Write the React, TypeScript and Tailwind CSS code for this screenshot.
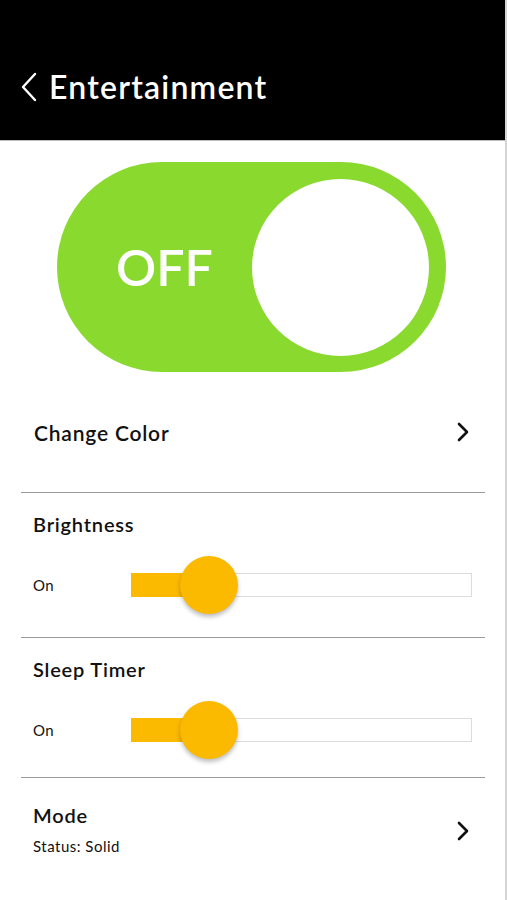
import React from "react";

const Chevron = ({ className }: { className?: string }) => (
  <svg className={className} viewBox="0 0 14 22" fill="none" stroke="#111" strokeWidth="2.6" strokeLinecap="round" strokeLinejoin="round">
    <path d="M3 3 L11 11 L3 19" />
  </svg>
);

const Slider = () => (
  <div className="relative h-[24px] w-[341px]">
    <div className="absolute inset-0 border border-[#dcdcdc] bg-white" />
    <div className="absolute left-0 top-0 h-[24px] w-[80px] bg-[#fbb900]" />
    <div className="absolute left-[49px] top-[-17px] h-[58px] w-[58px] rounded-full bg-[#fbb900] shadow-[0_3px_4px_rgba(0,0,0,0.25)]" />
  </div>
);

export default function App() {
  return (
    <div className="flex w-[507px] bg-white" style={{ fontFamily: "Lato, 'Open Sans', sans-serif" }}>
      <div className="flex h-[900px] w-[507px] flex-col border-r-2 border-[#d4d4d4]">
        <div className="flex h-[141px] items-end border-b border-[#bdbdbd] bg-black pb-[37px] pl-[20px]">
          <svg className="mb-[1px] h-[30px] w-[18px]" viewBox="0 0 18 30" fill="none" stroke="#fff" strokeWidth="2.4" strokeLinecap="round" strokeLinejoin="round">
            <path d="M15 2 L3 15 L15 28" />
          </svg>
          <span className="ml-[11px] text-[32px] font-semibold leading-none tracking-[1.2px] text-white">Entertainment</span>
        </div>

        <div className="flex justify-center pt-[21px] pr-[2px]">
          <div className="flex h-[210px] w-[389px] items-center rounded-full bg-[#8ad92e] pr-[17px]">
            <div className="flex flex-1 justify-center pl-[20px] text-[50px] font-semibold leading-none text-white">OFF</div>
            <div className="h-[177px] w-[177px] rounded-full bg-white" />
          </div>
        </div>

        <div className="mx-[21px] mr-[20px] flex h-[121px] items-start justify-between border-b border-[#9a9a9a] pt-[48px] pl-[13px] pr-[15px]">
          <span className="text-[21px] font-semibold leading-[26px] tracking-[0.8px] text-[#111]">Change Color</span>
          <Chevron className="mt-[1px] h-[22px] w-[14px]" />
        </div>

        <div className="ml-[21px] mr-[20px] flex h-[145px] flex-col border-b border-[#9a9a9a] pl-[12px] pr-[13px] pt-[19px]">
          <span className="text-[20px] font-semibold leading-[24px] tracking-[0.8px] text-[#111]">Brightness</span>
          <div className="mt-[37px] flex items-center">
            <span className="w-[98px] text-[15px] tracking-[0.5px] text-[#111]">On</span>
            <Slider />
          </div>
        </div>

        <div className="ml-[21px] mr-[20px] flex h-[140px] flex-col border-b border-[#9a9a9a] pl-[12px] pr-[13px] pt-[19px]">
          <span className="text-[20px] font-semibold leading-[24px] tracking-[0.8px] text-[#111]">Sleep Timer</span>
          <div className="mt-[37px] flex items-center">
            <span className="w-[98px] text-[15px] tracking-[0.5px] text-[#111]">On</span>
            <Slider />
          </div>
        </div>

        <div className="ml-[21px] mr-[20px] flex items-center justify-between pl-[12px] pr-[15px] pt-[25px]">
          <div className="flex flex-col">
            <span className="text-[20px] font-semibold leading-[24px] tracking-[0.8px] text-[#111]">Mode</span>
            <span className="mt-[8px] text-[15px] tracking-[0.5px] text-[#111]">Status: Solid</span>
          </div>
          <Chevron className="mt-[2px] h-[22px] w-[14px]" />
        </div>
      </div>
    </div>
  );
}
